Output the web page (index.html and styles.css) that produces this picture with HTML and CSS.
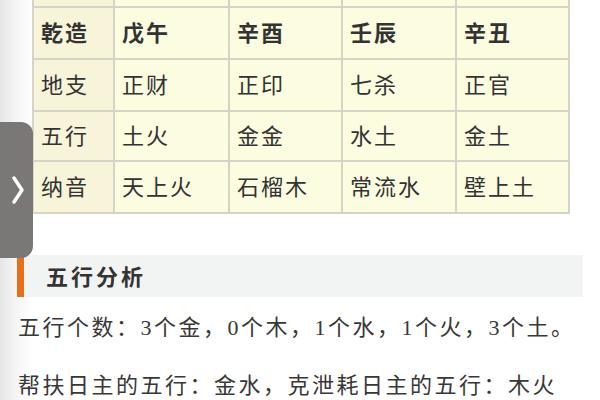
FILE: index.html
```html
<!DOCTYPE html>
<html lang="zh">
<head>
<meta charset="utf-8">
<link rel="stylesheet" href="styles.css">
</head>
<body>
<div class="page">
  <div class="table-wrap">
    <div class="grid">
      <div class="cell first top"></div><div class="cell top"></div><div class="cell top"></div><div class="cell top"></div><div class="cell top"></div>
      <div class="cell first head">乾造</div><div class="cell head">戊午</div><div class="cell head">辛酉</div><div class="cell head">壬辰</div><div class="cell head">辛丑</div>
      <div class="cell first">地支</div><div class="cell">正财</div><div class="cell">正印</div><div class="cell">七杀</div><div class="cell">正官</div>
      <div class="cell first">五行</div><div class="cell">土火</div><div class="cell">金金</div><div class="cell">水土</div><div class="cell">金土</div>
      <div class="cell first">纳音</div><div class="cell">天上火</div><div class="cell">石榴木</div><div class="cell">常流水</div><div class="cell">壁上土</div>
    </div>
  </div>
  <div class="section">
    <h2 class="section-title">五行分析</h2>
    <p class="text">五行个数：3个金，0个木，1个水，1个火，3个土。</p>
    <p class="text">帮扶日主的五行：金水，克泄耗日主的五行：木火</p>
  </div>
</div>
<div class="side-tab">
  <svg width="14" height="30" viewBox="0 0 14 30"><polyline points="3,3 11,15 3,27" fill="none" stroke="#ffffff" stroke-width="3.5" stroke-linecap="round" stroke-linejoin="round"/></svg>
</div>
</body>
</html>
```
FILE: styles.css
```css
html, body {
  margin: 0;
  padding: 0;
}
body {
  width: 600px;
  height: 400px;
  overflow: hidden;
  background: linear-gradient(to right, #e6e6e6 0px, #f6f6f6 18px, #ffffff 32px);
  font-family: "Noto Sans CJK SC", sans-serif;
  color: #333333;
  position: relative;
}
.page {
  display: flex;
  flex-direction: column;
}
.table-wrap {
  padding-left: 32px;
}
.grid {
  display: grid;
  width: 534px;
  grid-template-columns: 79px 113px 111px 112px 111px;
  grid-template-rows: 6px 50px 50px 48px 50px;
  gap: 2px;
  padding: 0 2px 2px 2px;
  background: #d6d4c6;
}
.cell {
  background: #fcfce0;
  display: flex;
  align-items: center;
  padding-left: 7px;
  padding-bottom: 4px;
  box-sizing: border-box;
  font-size: 22px;
  letter-spacing: 2px;
  color: #333333;
}
.cell.top {
  padding-bottom: 0;
}
.cell.first {
  background: #f7f4d9;
}
.cell.head {
  font-weight: bold;
}
.section {
  margin: 41px 17px 0 17px;
}
.section-title {
  margin: 0;
  height: 42px;
  display: flex;
  align-items: center;
  background: #f2f3f3;
  border-left: 7px solid #e6711d;
  padding-left: 22px;
  padding-bottom: 2px;
  box-sizing: border-box;
  font-size: 22px;
  letter-spacing: 3px;
  font-weight: bold;
  color: #333333;
}
.text {
  margin: 0;
  padding-left: 1px;
  font-family: "Liberation Serif", "Noto Sans CJK SC", serif;
  font-size: 22px;
  letter-spacing: 2.5px;
  line-height: 58px;
  color: #383838;
}
.text:first-of-type {
  margin-top: 2px;
}
.side-tab {
  position: absolute;
  left: 0;
  top: 122px;
  width: 33px;
  height: 136px;
  background: #7a7877;
  border-radius: 0 12px 12px 0;
  display: flex;
  align-items: center;
  justify-content: center;
  padding-left: 2px;
  box-sizing: border-box;
}
```
